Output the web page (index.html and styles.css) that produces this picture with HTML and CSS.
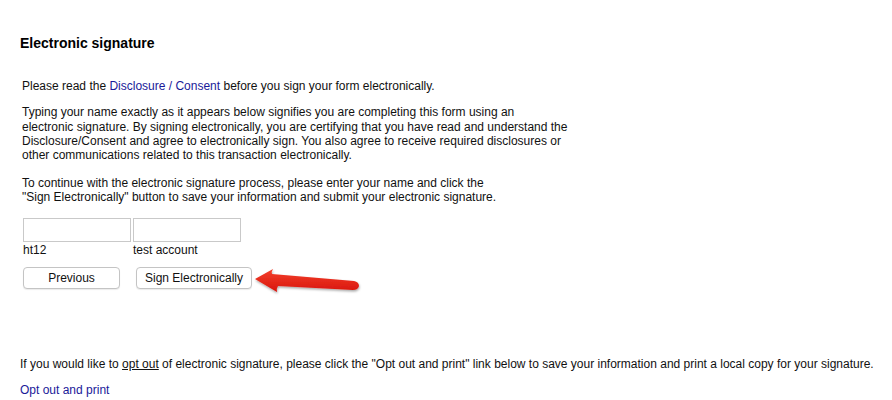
FILE: index.html
```html
<!DOCTYPE html>
<html>
<head>
<meta charset="utf-8">
<link rel="stylesheet" href="styles.css">
</head>
<body>
<div class="page">
  <h1 class="title">Electronic signature</h1>
  <div class="form">
    <p class="p1">Please read the <a class="link" href="#">Disclosure / Consent</a> before you sign your form electronically.</p>
    <p class="p2">Typing your name exactly as it appears below signifies you are completing this form using an<br>electronic signature. By signing electronically, you are certifying that you have read and understand the<br>Disclosure/Consent and agree to electronically sign. You also agree to receive required disclosures or<br>other communications related to this transaction electronically.</p>
    <p class="p3">To continue with the electronic signature process, please enter your name and click the<br>"Sign Electronically" button to save your information and submit your electronic signature.</p>
    <div class="names">
      <div class="field"><input class="box" type="text"><span class="lbl">ht12</span></div>
      <div class="field"><input class="box" type="text"><span class="lbl">test account</span></div>
    </div>
    <div class="buttons">
      <button class="btn btn-prev">Previous</button>
      <button class="btn btn-sign">Sign Electronically</button>
      <svg class="arrow" width="120" height="40" viewBox="250 262 120 40">
        <defs>
          <linearGradient id="rg" x1="0" y1="0" x2="0" y2="1">
            <stop offset="0" stop-color="#f4402c"/>
            <stop offset="1" stop-color="#d8150c"/>
          </linearGradient>
          <filter id="sh" x="-20%" y="-40%" width="140%" height="180%">
            <feDropShadow dx="0.5" dy="1.5" stdDeviation="1.2" flood-color="#000" flood-opacity="0.35"/>
          </filter>
        </defs>
        <path filter="url(#sh)" fill="url(#rg)" d="M255,279 L273,269 Q271,272 272,274 L354,281 Q359,282 359,286 Q358,290 353,290 L278,286 Q276,289 277,292 Z"/>
      </svg>
    </div>
  </div>
  <p class="optout">If you would like to <u>opt out</u> of electronic signature, please click the "Opt out and print" link below to save your information and print a local copy for your signature.</p>
  <a class="link optlink" href="#">Opt out and print</a>
</div>
</body>
</html>
```
FILE: styles.css
```css
html, body {
  margin: 0;
  padding: 0;
  background: #ffffff;
}
.page {
  padding: 35px 20px 0 20px;
  font-family: "Liberation Sans", Arial, sans-serif;
  font-size: 12px;
  color: #111;
}
.title {
  margin: 0 0 28px 0;
  font-size: 14px;
  font-weight: bold;
  line-height: 16px;
  color: #000;
}
.form {
  padding-left: 2px;
}
.form p {
  margin: 0;
  line-height: 14.33px;
}
.p2 { margin-top: 12px !important; }
.p3 { margin-top: 13px !important; }
.link {
  color: #1a1a99;
  text-decoration: none;
}
.names {
  display: flex;
  gap: 2px;
  margin-top: 14px;
  padding-left: 1px;
}
.field {
  display: flex;
  flex-direction: column;
  width: 108px;
}
.box {
  box-sizing: border-box;
  width: 108px;
  height: 24px;
  margin: 0;
  border: 1px solid #c9c9c9;
  background: #fff;
}
.lbl {
  line-height: 15px;
  margin-top: 1px;
}
.buttons {
  position: relative;
  display: flex;
  gap: 16px;
  margin-top: 9px;
  padding-left: 1px;
}
.btn {
  box-sizing: border-box;
  height: 22px;
  margin: 0;
  padding: 0;
  background: #fff;
  border: 1px solid #c4c4c4;
  border-radius: 4px;
  box-shadow: 0 1px 1px rgba(0,0,0,0.08);
  font-family: "Liberation Sans", Arial, sans-serif;
  font-size: 12px;
  color: #111;
}
.btn-prev { width: 97px; }
.btn-sign { width: 116px; }
.arrow {
  position: absolute;
  left: 228px;
  top: -5px;
}
.optout {
  margin: 68px 0 0 0;
  line-height: 14px;
  white-space: nowrap;
}
.optlink {
  display: block;
  margin-top: 12px;
  line-height: 14px;
}
```
